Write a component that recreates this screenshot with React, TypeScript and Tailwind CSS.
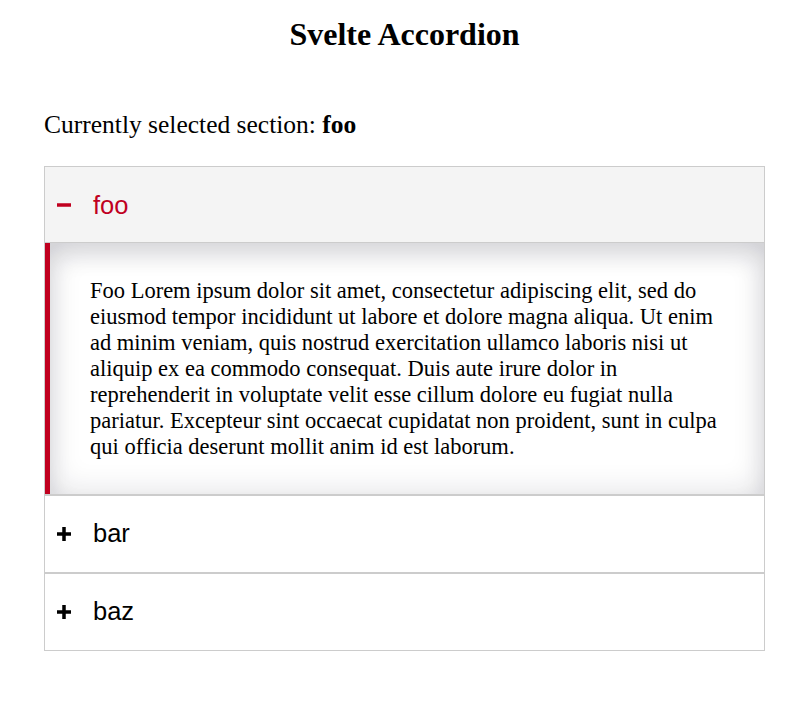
import { useState } from "react";

const SECTIONS = [
  {
    id: "foo",
    text: "Foo Lorem ipsum dolor sit amet, consectetur adipiscing elit, sed do eiusmod tempor incididunt ut labore et dolore magna aliqua. Ut enim ad minim veniam, quis nostrud exercitation ullamco laboris nisi ut aliquip ex ea commodo consequat. Duis aute irure dolor in reprehenderit in voluptate velit esse cillum dolore eu fugiat nulla pariatur. Excepteur sint occaecat cupidatat non proident, sunt in culpa qui officia deserunt mollit anim id est laborum.",
  },
  { id: "bar", text: "Bar Lorem ipsum dolor sit amet." },
  { id: "baz", text: "Baz Lorem ipsum dolor sit amet." },
];

function Sign({ open }: { open: boolean }) {
  return (
    <svg width="14" height="14" viewBox="0 0 14 14" className="shrink-0">
      <rect x="0" y="5.25" width="14" height="3.5" fill="currentColor" />
      {!open && <rect x="5.25" y="0" width="3.5" height="14" fill="currentColor" />}
    </svg>
  );
}

export default function App() {
  const [selected, setSelected] = useState<string | null>("foo");

  return (
    <div className="min-h-screen bg-white px-[44px] font-['Liberation_Serif',serif] text-black">
      <h1 className="pt-[14px] text-center text-[32px] font-bold leading-[40px]">Svelte Accordion</h1>
      <p className="mt-[56px] text-[25.5px] leading-[30px]">
        Currently selected section: <b>{selected ?? "none"}</b>
      </p>
      <div className="mt-[26px] border border-[#cccccc]">
        {SECTIONS.map((s, i) => {
          const open = selected === s.id;
          return (
            <div key={s.id} className={i > 0 ? "border-t-2 border-[#cccccc]" : ""}>
              <button
                type="button"
                onClick={() => setSelected(open ? null : s.id)}
                className={
                  "flex h-[76px] w-full items-center gap-[22px] pl-[12px] text-left font-['Liberation_Sans',sans-serif] text-[25.5px] " +
                  (open ? "border-b border-[#cccccc] bg-[#f4f4f4] text-[#c0001f]" : "bg-white text-black")
                }
              >
                <Sign open={open} />
                <span className={open ? "mt-[1px]" : "-mt-[2px]"}>{s.id}</span>
              </button>
              {open && (
                <div className="border-l-[5px] border-[#c0001f] pl-[40px] pr-[40px] pb-[34px] pt-[35px] text-[22.5px] leading-[26px] shadow-[inset_0_0_32px_rgba(20,20,40,0.14),inset_0_14px_22px_rgba(20,20,40,0.1)]">
                  {s.text}
                </div>
              )}
            </div>
          );
        })}
      </div>
    </div>
  );
}
